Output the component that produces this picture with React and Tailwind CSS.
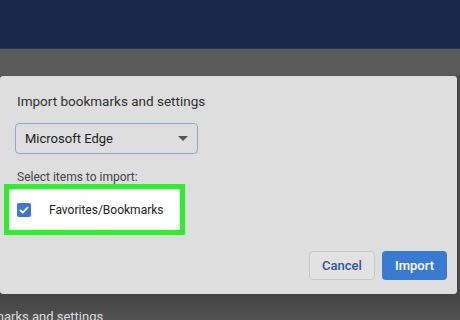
import React from "react";

export default function App() {
  return (
    <div className="w-[460px] h-[320px] overflow-hidden bg-[#4a4a4a] flex flex-col" style={{ fontFamily: "Roboto, 'Liberation Sans', sans-serif" }}>
      <div className="h-[49px] bg-[#1a2749] border-b border-[#2a3550]" />
      <div className="h-[27px] bg-[#5a5a5a]" />
      <div className="w-[457px] h-[218px] bg-[#dedede] rounded-[3px] flex flex-col shadow-[0_1px_2px_rgba(0,0,0,0.5)]">
        <div className="pl-[17px] pt-[16px] text-[13.5px] text-[#303030] leading-[18px]">
          Import bookmarks and settings
        </div>
        <div className="ml-[15px] mt-[13px] w-[183px] h-[31px] border border-[#8fa8d4] rounded-[4px] flex items-center justify-between pl-[9px] pr-[9px]">
          <span className="text-[13px] text-[#222]">Microsoft Edge</span>
          <svg width="10" height="6" viewBox="0 0 10 6"><path d="M0 0 L10 0 L5 5 Z" fill="#555" /></svg>
        </div>
        <div className="pl-[17px] mt-[15px] text-[12px] text-[#444] leading-[16px]">
          Select items to import:
        </div>
        <div className="ml-[4px] mt-[-1px] w-[181px] h-[51px] border-[5px] border-[#2bf02b] bg-white flex items-center">
          <div className="ml-[8px] w-[14px] h-[14px] rounded-[2px] bg-[#3b78d6] flex items-center justify-center">
            <svg width="10" height="8" viewBox="0 0 10 8"><path d="M1 4 L3.8 6.6 L9 1.2" stroke="white" strokeWidth="1.8" fill="none" /></svg>
          </div>
          <span className="ml-[18px] text-[12px] text-[#222]">Favorites/Bookmarks</span>
        </div>
        <div className="mt-auto mb-[14px] mr-[10px] flex justify-end gap-[7px]">
          <button className="w-[66px] h-[29px] border border-[#c6c6c6] rounded-[4px] bg-[#e2e2e2] text-[13px] font-medium text-[#2f5597]">
            Cancel
          </button>
          <button className="w-[65px] h-[29px] rounded-[4px] bg-[#3a7bd2] text-[13px] font-medium text-white">
            Import
          </button>
        </div>
      </div>
      <div className="flex-1 bg-gradient-to-b from-[#444] to-[#525252] flex items-end">
        <span className="ml-[-37px] mb-[-6px] text-[13px] text-[#dcdcdc] whitespace-nowrap">Bookmarks and settings</span>
      </div>
    </div>
  );
}
